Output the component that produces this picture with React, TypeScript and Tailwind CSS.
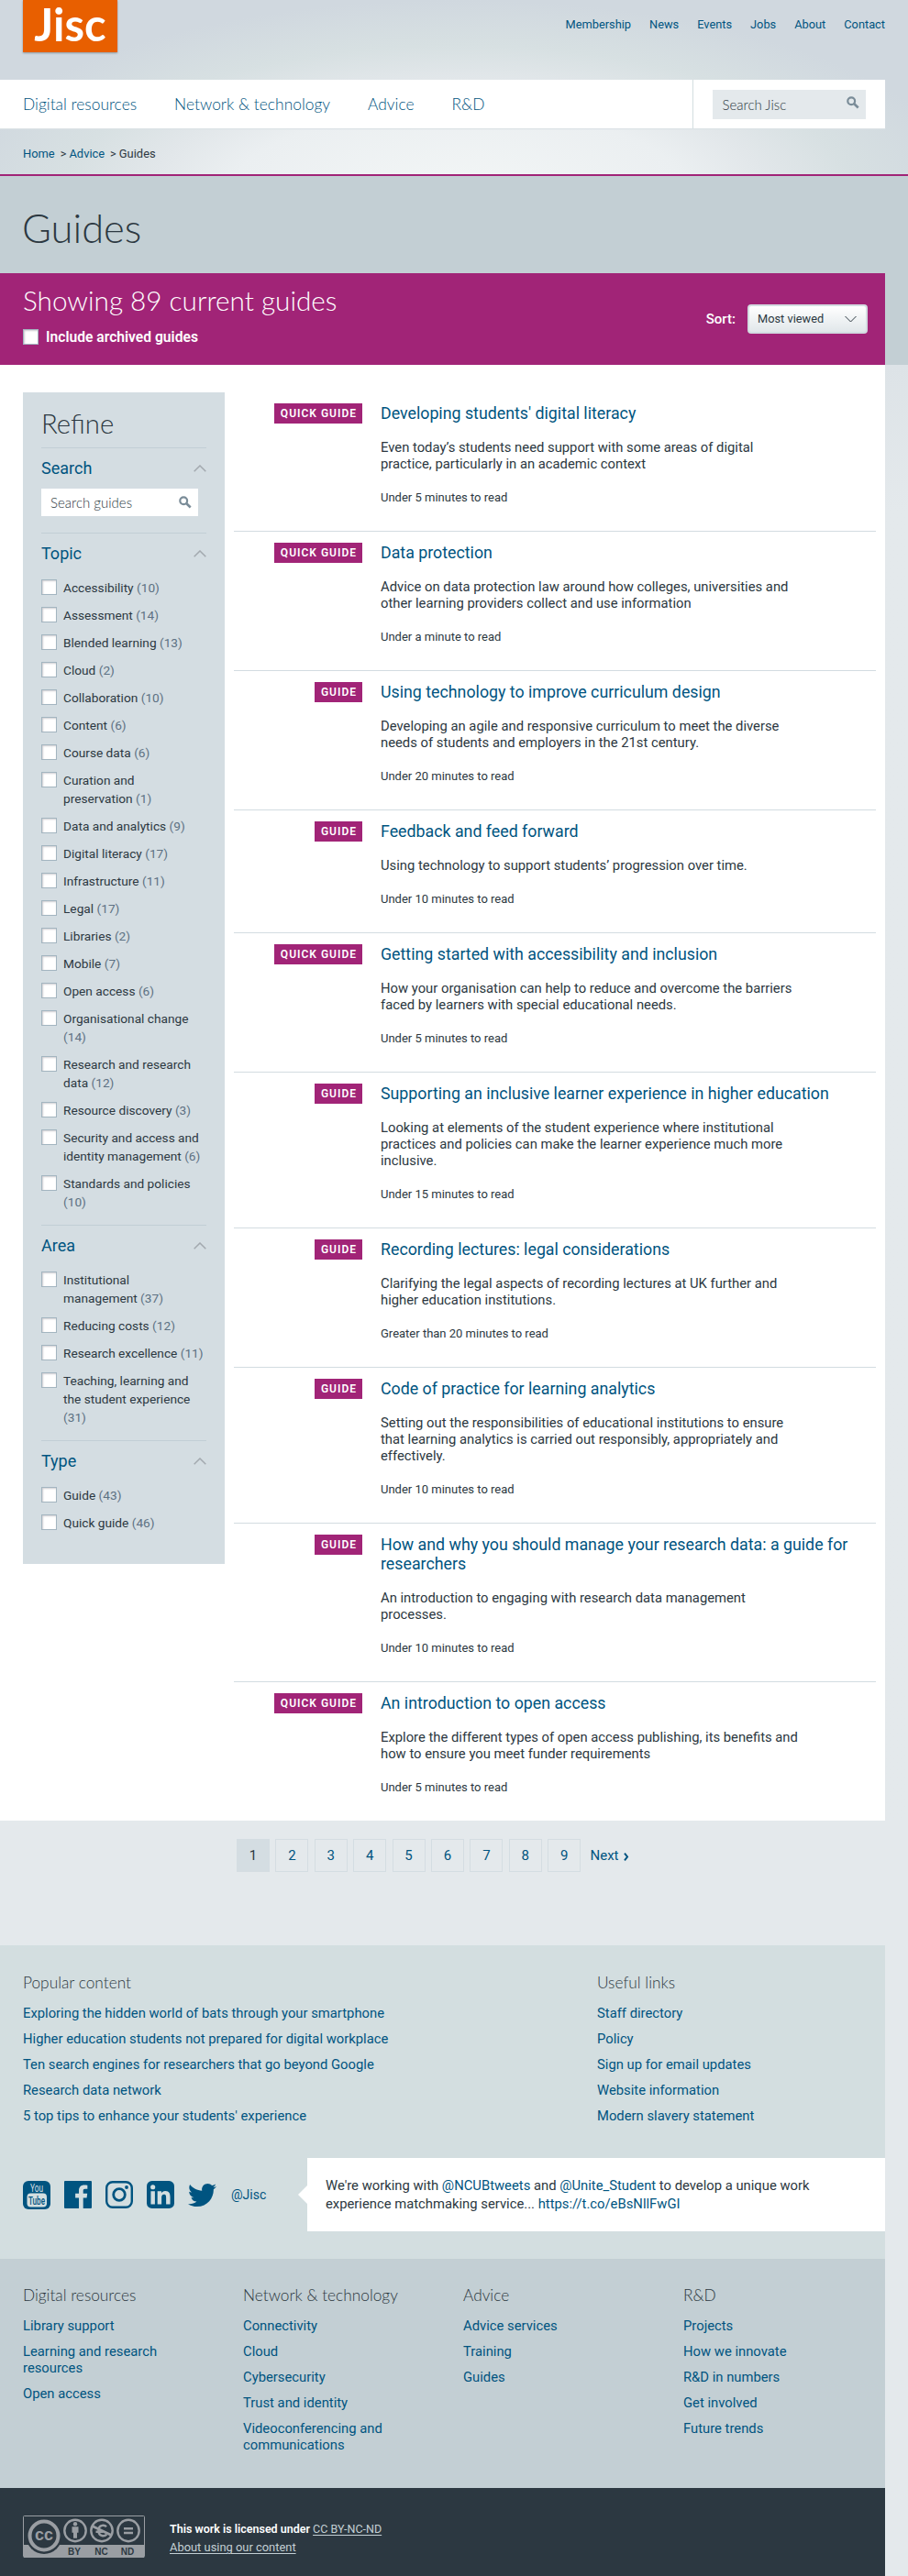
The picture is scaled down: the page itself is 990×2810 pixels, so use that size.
import { FaTwitter } from "react-icons/fa";

type Guide = { kind: "GUIDE" | "QUICK GUIDE"; title: string; text: string; time: string };

const guides: Guide[] = [
  { kind: "QUICK GUIDE", title: "Developing students' digital literacy", text: "Even today’s students need support with some areas of digital\npractice, particularly in an academic context", time: "Under 5 minutes to read" },
  { kind: "QUICK GUIDE", title: "Data protection", text: "Advice on data protection law around how colleges, universities and\nother learning providers collect and use information", time: "Under a minute to read" },
  { kind: "GUIDE", title: "Using technology to improve curriculum design", text: "Developing an agile and responsive curriculum to meet the diverse\nneeds of students and employers in the 21st century.", time: "Under 20 minutes to read" },
  { kind: "GUIDE", title: "Feedback and feed forward", text: "Using technology to support students’ progression over time.", time: "Under 10 minutes to read" },
  { kind: "QUICK GUIDE", title: "Getting started with accessibility and inclusion", text: "How your organisation can help to reduce and overcome the barriers\nfaced by learners with special educational needs.", time: "Under 5 minutes to read" },
  { kind: "GUIDE", title: "Supporting an inclusive learner experience in higher education", text: "Looking at elements of the student experience where institutional\npractices and policies can make the learner experience much more\ninclusive.", time: "Under 15 minutes to read" },
  { kind: "GUIDE", title: "Recording lectures: legal considerations", text: "Clarifying the legal aspects of recording lectures at UK further and\nhigher education institutions.", time: "Greater than 20 minutes to read" },
  { kind: "GUIDE", title: "Code of practice for learning analytics", text: "Setting out the responsibilities of educational institutions to ensure\nthat learning analytics is carried out responsibly, appropriately and\neffectively.", time: "Under 10 minutes to read" },
  { kind: "GUIDE", title: "How and why you should manage your research data: a guide for\nresearchers", text: "An introduction to engaging with research data management\nprocesses.", time: "Under 10 minutes to read" },
  { kind: "QUICK GUIDE", title: "An introduction to open access", text: "Explore the different types of open access publishing, its benefits and\nhow to ensure you meet funder requirements", time: "Under 5 minutes to read" },
];

type Option = [string, number];

const topics: Option[] = [
  ["Accessibility", 10], ["Assessment", 14], ["Blended learning", 13], ["Cloud", 2], ["Collaboration", 10],
  ["Content", 6], ["Course data", 6], ["Curation and\npreservation", 1], ["Data and analytics", 9],
  ["Digital literacy", 17], ["Infrastructure", 11], ["Legal", 17], ["Libraries", 2], ["Mobile", 7],
  ["Open access", 6], ["Organisational change\n", 14], ["Research and research\ndata", 12],
  ["Resource discovery", 3], ["Security and access and\nidentity management", 6], ["Standards and policies\n", 10],
];
const areas: Option[] = [
  ["Institutional\nmanagement", 37], ["Reducing costs", 12], ["Research excellence", 11],
  ["Teaching, learning and\nthe student experience\n", 31],
];
const types: Option[] = [["Guide", 43], ["Quick guide", 46]];

const siteLinks = [
  { title: "Digital resources", links: ["Library support", "Learning and research\nresources", "Open access"] },
  { title: "Network & technology", links: ["Connectivity", "Cloud", "Cybersecurity", "Trust and identity", "Videoconferencing and\ncommunications"] },
  { title: "Advice", links: ["Advice services", "Training", "Guides"] },
  { title: "R&D", links: ["Projects", "How we innovate", "R&D in numbers", "Get involved", "Future trends"] },
];

function SearchIcon() {
  return (
    <svg width="14" height="14" viewBox="0 0 14 14" fill="none" stroke="#7a8c98">
      <circle cx="5.2" cy="5.2" r="3.9" strokeWidth="2.2" />
      <path d="M8.3 8.3l4.4 4.2" strokeWidth="2.6" />
    </svg>
  );
}

function Checkbox() {
  return <span className="block size-[17px] shrink-0 border border-[#a3b5c0] bg-white shadow-[inset_1px_1px_2px_#cfcdd1]" />;
}

function PanelHeading({ children }: { children: string }) {
  return (
    <div className="flex h-[35px] items-start justify-between border-t border-[#c2ced5] pt-[10px]">
      <h3 className="text-[18px] leading-6 text-[#005480]">{children}</h3>
      <svg className="mt-[8px]" width="14" height="8" viewBox="0 0 14 8" fill="none" stroke="#a3a9af" strokeWidth="1.5">
        <path d="M.7 7.3L7 1l6.3 6.3" />
      </svg>
    </div>
  );
}

function Options({ items }: { items: Option[] }) {
  return (
    <ul className="pt-[15px] pb-[5px]">
      {items.map(([label, count]) => {
        const lines = label.split("\n");
        return (
          <li key={label} className="mb-[10px] flex gap-[7px]">
            <span className="mt-px"><Checkbox /></span>
            <span className="text-[13.7px] leading-5 whitespace-pre text-[#2c3841]">
              {lines.map((line, i) => (
                <span key={i} className="block">
                  {line && <span>{line}</span>}
                  {i === lines.length - 1 && <span className="text-[#5d7183]">{line ? " " : ""}({count})</span>}
                </span>
              ))}
            </span>
          </li>
        );
      })}
    </ul>
  );
}

function GuideRow({ guide }: { guide: Guide }) {
  return (
    <article className="flex border-b border-[#d3dce1] pt-[12px] pb-[27px] last:border-b-0">
      <div className="flex w-[140px] shrink-0 justify-end">
        <span className="flex h-[22px] items-center bg-[#a12477] pr-[6px] pl-[7px] text-[12px] font-semibold tracking-[1px] text-white">{guide.kind}</span>
      </div>
      <div className="ml-[20px] whitespace-pre">
        <h2 className="text-[17.8px] leading-[21px] text-[#005480]">{guide.title}</h2>
        <p className="mt-[18px] text-[14.8px] leading-[18px]">{guide.text}</p>
        <p className="mt-[19px] text-[13px] leading-[18px]">{guide.time}</p>
      </div>
    </article>
  );
}

function FooterList({ title, links }: { title: string; links: string[] }) {
  return (
    <div>
      <h4 className="font-['Lato'] text-[17.3px] leading-5 font-light">{title}</h4>
      <ul className="mt-[14px] space-y-[10px]">
        {links.map((l) => (
          <li key={l} className="text-[14.8px] leading-[18px] whitespace-pre text-[#005480]">{l}</li>
        ))}
      </ul>
    </div>
  );
}

function SocialIcons() {
  return (
    <div className="flex items-center gap-[15px] text-[#005480]">
      <svg width="30" height="31" viewBox="0 0 30 31">
        <rect width="30" height="31" rx="6" fill="currentColor" />
        <text x="8" y="12" textLength="14" lengthAdjust="spacingAndGlyphs" fontFamily="Roboto" fontSize="12" fill="#d3dee0">You</text>
        <rect x="4.5" y="13.5" width="21.5" height="15" rx="4" fill="#d3dee0" />
        <text x="6" y="25.5" textLength="18" lengthAdjust="spacingAndGlyphs" fontFamily="Roboto" fontWeight="500" fontSize="12.5" fill="currentColor">Tube</text>
      </svg>
      <svg width="30" height="30" viewBox="0 0 24 24" fill="currentColor">
        <path d="M23 0H1C.4 0 0 .4 0 1v22c0 .6.4 1 1 1h11.818v-9.294H9.689v-3.621h3.129V8.41c0-3.099 1.894-4.785 4.659-4.785 1.325 0 2.464.097 2.796.141v3.24h-1.921c-1.5 0-1.792.721-1.792 1.771v2.311h3.584l-.465 3.63H16.56V24H23c.6 0 1-.4 1-1V1c0-.6-.4-1-1-1" />
      </svg>
      <svg width="30" height="30" viewBox="0 0 30 30" fill="none" stroke="currentColor">
        <rect x="1.2" y="1.2" width="27.6" height="27.6" rx="6.5" strokeWidth="2.4" />
        <circle cx="15" cy="15" r="6.3" strokeWidth="2.8" />
        <circle cx="23" cy="7" r="1.9" fill="currentColor" stroke="none" />
      </svg>
      <svg width="30" height="30" viewBox="0 0 24 24">
        <rect width="24" height="24" rx="4.5" fill="currentColor" />
        <path fill="#d3dee0" d="M20.447 20.452h-3.554v-5.569c0-1.328-.027-3.037-1.852-3.037-1.853 0-2.136 1.445-2.136 2.939v5.667H9.351V9h3.414v1.561h.046c.477-.9 1.637-1.85 3.37-1.85 3.601 0 4.267 2.37 4.267 5.455v6.286zM5.337 7.433a2.062 2.062 0 0 1-2.063-2.065 2.064 2.064 0 1 1 2.063 2.065zm1.782 13.019H3.555V9h3.564v11.452z" />
      </svg>
      <FaTwitter size={31} />
    </div>
  );
}

function LicenceBadge() {
  return (
    <svg width="133" height="46" viewBox="0 0 133 46" fontFamily="Liberation Sans" fontWeight="700">
      <rect x=".5" y=".5" width="132" height="45" rx="1" fill="#2c3841" stroke="#9a9ea3" />
      <rect x="1" y="32" width="131" height="14" fill="#9a9ea3" />
      <circle cx="23" cy="22.5" r="19.5" fill="#2c3841" />
      <circle cx="23" cy="22" r="15.5" fill="#2c3841" stroke="#9a9ea3" strokeWidth="4" />
      <text x="13" y="27" fontSize="18" textLength="20" lengthAdjust="spacingAndGlyphs" fill="#9a9ea3">cc</text>
      <g fill="none" stroke="#9a9ea3" strokeWidth="2.4">
        <circle cx="57" cy="16.5" r="11.7" />
        <circle cx="86" cy="16.5" r="11.7" />
        <circle cx="115" cy="16.5" r="11.7" />
        <path d="M110 14.3h10M110 19h10" />
        <path d="M75.5 11.5l21 10" strokeWidth="2.8" />
        <path d="M91 12.3c-2-2.3-7.5-2.2-8.5 2.5v3c.8 4.8 6 5.5 8.8 2.8M79.5 17.8h8" />
      </g>
      <g fill="#9a9ea3">
        <circle cx="57" cy="9.3" r="2.2" />
        <path d="M53.5 12.2h7v6.5h-1.5v6h-4v-6h-1.5z" />
      </g>
      <g fill="#2c3841" fontSize="10" textAnchor="middle">
        <text x="56" y="43">BY</text>
        <text x="85.5" y="43">NC</text>
        <text x="114" y="43">ND</text>
      </g>
    </svg>
  );
}

export default function App() {
  return (
    <div className="h-[2810px] w-[990px] bg-[#e4e9ec] font-['Roboto',sans-serif] text-[15px] text-[#2c3841]">
      <header className="h-[190px] bg-[radial-gradient(ellipse_560px_215px_at_500px_215px,#f3f6f6_0%,#ebeff1_45%,#e2e7ea_60%,#d7e0e2_77%,#d0d8df_100%)]">
        <div className="flex h-[87px] w-[965px] items-start justify-between pl-[25px]">
          <div className="flex h-[57px] w-[103px] justify-center bg-[#e85f00] font-['Lato'] text-[49px] leading-[52px] font-bold text-white shadow-[0_1px_2px_#8a97a0]">Jisc</div>
          <nav className="flex gap-[20px] pt-[17px] text-[12.8px] leading-5 text-[#005480]">
            {["Membership", "News", "Events", "Jobs", "About", "Contact"].map((l) => <a key={l}>{l}</a>)}
          </nav>
        </div>
        <div className="flex h-[53px] w-[965px] bg-white shadow-[0_1px_1px_#dbe2e5]">
          <nav className="flex flex-1 gap-[41px] pl-[25px] font-['Lato'] text-[17.4px] leading-[53px] font-light text-[#005480]">
            {["Digital resources", "Network & technology", "Advice", "R&D"].map((l) => <a key={l}>{l}</a>)}
          </nav>
          <div className="w-[210px] border-l border-[#d3dee0] pt-[11px] pl-[21px]">
            <div className="flex h-[32px] w-[167px] items-center justify-between bg-[#e4e9ec] pr-[7px] pl-[10.5px]">
              <span className="font-['Lato'] text-[15px] font-light">Search Jisc</span>
              <span className="-mt-1"><SearchIcon /></span>
            </div>
          </div>
        </div>
        <div className="flex h-[50px] pl-[25px] text-[12.9px] leading-[55px]">
          <a className="text-[#005480]">Home</a>
          <span className="mr-[3px] ml-[6px]">&gt;</span>
          <a className="text-[#005480]">Advice</a>
          <span className="mr-[3px] ml-[6px]">&gt;</span>
          <span>Guides</span>
        </div>
      </header>

      <div className="h-[208px] border-t-2 border-[#a12477] bg-[#c3cfd4]">
        <h1 className="h-[106px] pl-[24px] font-['Lato'] text-[43.5px] leading-[112px] font-light">Guides</h1>
        <div className="flex h-[100px] w-[965px] justify-between bg-[#a12477] pl-[25px] text-white">
          <div className="pt-[12px]">
            <h2 className="font-['Lato'] text-[29.7px] leading-9 font-light">Showing 89 current guides</h2>
            <div className="mt-[13px] flex h-[17px] items-center gap-[8px]">
              <Checkbox />
              <span className="mt-px text-[15.65px] leading-5 font-semibold">Include archived guides</span>
            </div>
          </div>
          <div className="mt-[34px] flex h-[32px] items-center pr-[19px]">
            <span className="mr-[13px] text-[15px] font-medium">Sort:</span>
            <div className="flex h-[32px] w-[131px] items-center justify-between rounded-[4px] border-2 border-[#d3dce1] bg-linear-to-b from-white to-[#e1e7ea] pr-[10px] pl-[9px] text-[12.8px] text-[#2c3841]">
              Most viewed
              <svg width="13" height="8" viewBox="0 0 13 8" fill="none" stroke="#2c3841"><path d="M.5 1l6 6 6-6" /></svg>
            </div>
          </div>
        </div>
      </div>

      <div className="bg-linear-to-b from-[#dde3e7] to-[#e4e9ec] to-10%">
        <main className="flex h-[1588px] w-[965px] items-start bg-white pt-[30px] pl-[25px]">
          <aside className="w-[220px] bg-[#d4dde2] px-[20px] pt-[16px] pb-[20px]">
            <h2 className="mb-[8px] font-['Lato'] text-[29.3px] leading-9 font-light">Refine</h2>
            <PanelHeading>Search</PanelHeading>
            <div className="mt-[10px] mb-[18px] flex h-[30px] w-[171px] items-center justify-between bg-white pr-[7px] pl-[10px]">
              <span className="font-['Lato'] text-[15px] font-light">Search guides</span>
              <SearchIcon />
            </div>
            <PanelHeading>Topic</PanelHeading>
            <Options items={topics} />
            <PanelHeading>Area</PanelHeading>
            <Options items={areas} />
            <PanelHeading>Type</PanelHeading>
            <Options items={types} />
          </aside>
          <section className="ml-[10px] w-[700px]">
            {guides.map((g) => <GuideRow key={g.title} guide={g} />)}
          </section>
        </main>
      </div>

      <nav className="flex h-[136px] items-start gap-[6.4px] pt-[20px] pl-[258px] text-[15px] text-[#005480]">
        <span className="flex h-[36px] w-[36px] items-center justify-center bg-[#d4dde2] text-[#2c3841]">1</span>
        {[2, 3, 4, 5, 6, 7, 8, 9].map((n) => (
          <a key={n} className="flex h-[36px] w-[36px] items-center justify-center border border-[#d4dde2]">{n}</a>
        ))}
        <a className="ml-[4px] flex h-[36px] items-center gap-[5px]">
          Next
          <svg className="mt-[3px]" width="6" height="9" viewBox="0 0 6 9" fill="none" stroke="currentColor" strokeWidth="2"><path d="M1 .7l3 3.8-3 3.8" /></svg>
        </a>
      </nav>

      <footer className="w-[965px]">
        <div className="h-[342px] bg-[#d3dee0] pt-[31px]">
          <div className="flex h-[201px] pl-[25px]">
            <div className="w-[626px]">
              <FooterList title="Popular content" links={["Exploring the hidden world of bats through your smartphone", "Higher education students not prepared for digital workplace", "Ten search engines for researchers that go beyond Google", "Research data network", "5 top tips to enhance your students' experience"]} />
            </div>
            <FooterList title="Useful links" links={["Staff directory", "Policy", "Sign up for email updates", "Website information", "Modern slavery statement"]} />
          </div>
          <div className="flex h-[80px] items-center pl-[25px]">
            <SocialIcons />
            <span className="w-[72px] pl-[16px] text-[14px] text-[#005480]">@Jisc</span>
            <svg width="10" height="20" viewBox="0 0 10 20" className="ml-auto"><path d="M10 0v20L0 10z" fill="#fff" /></svg>
            <p className="h-[80px] w-[630px] bg-white pt-[20px] pl-[20px] text-[14.8px] leading-5 whitespace-pre">
              We're working with <a className="text-[#005480]">@NCUBtweets</a> and <a className="text-[#005480]">@Unite_Student</a> to develop a unique work{"\n"}experience matchmaking service... <a className="text-[#005480]">https://t.co/eBsNllFwGI</a>
            </p>
          </div>
        </div>
        <div className="grid h-[250px] grid-cols-[240px_240px_240px_1fr] bg-[#c3cfd4] pt-[30px] pl-[25px]">
          {siteLinks.map((c) => <FooterList key={c.title} title={c.title} links={c.links} />)}
        </div>
        <div className="flex h-[96px] bg-[#2c3841] pt-[30px] pl-[25px] text-white">
          <LicenceBadge />
          <div className="ml-[27px] pt-[5px] text-[12.9px] leading-5">
            <p className="text-[12.5px] leading-5 font-semibold">This work is licensed under <a className="font-normal text-[#c3cfd4] underline underline-offset-2">CC BY-NC-ND</a></p>
            <p><a className="text-[#c3cfd4] underline underline-offset-2">About using our content</a></p>
          </div>
        </div>
      </footer>
    </div>
  );
}
